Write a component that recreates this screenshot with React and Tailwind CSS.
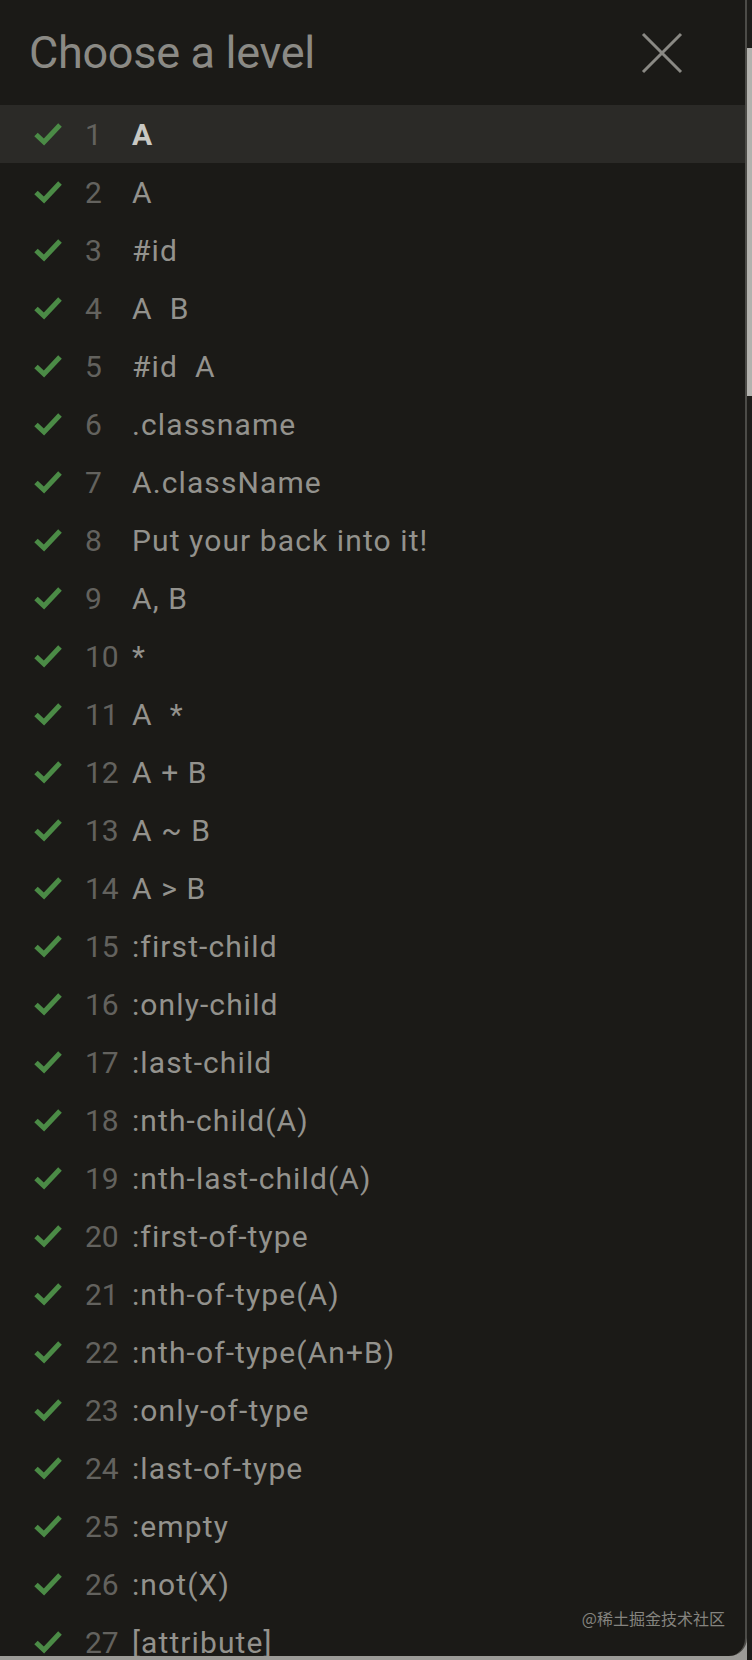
const levels = [
  'A',
  'A',
  '#id',
  'A  B',
  '#id  A',
  '.classname',
  'A.className',
  'Put your back into it!',
  'A, B',
  '*',
  'A  *',
  'A + B',
  'A ~ B',
  'A > B',
  ':first-child',
  ':only-child',
  ':last-child',
  ':nth-child(A)',
  ':nth-last-child(A)',
  ':first-of-type',
  ':nth-of-type(A)',
  ':nth-of-type(An+B)',
  ':only-of-type',
  ':last-of-type',
  ':empty',
  ':not(X)',
  '[attribute]',
];

const font = { fontFamily: 'Roboto, "Noto Sans", sans-serif' };

function Check() {
  return (
    <svg width="30" height="24" viewBox="0 0 30 24" className="shrink-0">
      <path d="M3 12.5 L11 20 L27 3" fill="none" stroke="#4b8b46" strokeWidth="5" strokeLinejoin="miter" />
    </svg>
  );
}

function CloseIcon() {
  return (
    <svg width="42" height="42" viewBox="0 0 42 42">
      <path d="M2 2 L40 40 M40 2 L2 40" stroke="#8a8984" strokeWidth="3" fill="none" />
    </svg>
  );
}

function LevelRow({ n, label, current }) {
  return (
    <div className={`flex items-center h-[58px] pl-[33px] ${current ? 'bg-[#2b2a27]' : ''}`} style={font}>
      <Check />
      <div className="flex items-baseline">
        <span className="w-[47px] ml-[22px] text-[30px] text-[#63625e]">{n}</span>
        <span
          className={`text-[30px] tracking-[1.1px] whitespace-pre ${current ? 'font-bold text-[#c9c8c3]' : 'text-[#93928d]'}`}
        >
          {label}
        </span>
      </div>
    </div>
  );
}

export default function App() {
  return (
    <div className="flex w-[752px] h-[1660px] bg-[#9c9b97] overflow-hidden">
      <div className="relative w-[747px] h-[1656px] bg-[#1b1a17] border-r-2 border-[#4d4c48] rounded-br-[18px] overflow-hidden">
        <div className="flex items-center justify-between h-[105px] pl-[29px] pr-[62px]">
          <h1 className="text-[45px] text-[#8b8a85] tracking-[-0.3px]" style={font}>
            Choose a level
          </h1>
          <CloseIcon />
        </div>
        <div className="flex flex-col">
          {levels.map((label, i) => (
            <LevelRow key={i} n={i + 1} label={label} current={i === 0} />
          ))}
        </div>
        <div
          className="absolute right-[20px] bottom-[26px] text-[16px] text-[#85847f]"
          style={{ fontFamily: '"Noto Sans CJK SC", sans-serif' }}
        >
          @稀土掘金技术社区
        </div>
      </div>
      <div className="flex-1 flex flex-col bg-[#1e1d1a]">
        <div className="h-[48px]" />
        <div className="h-[348px] bg-[#b3b2ae]" />
        <div className="flex-1" />
      </div>
    </div>
  );
}
